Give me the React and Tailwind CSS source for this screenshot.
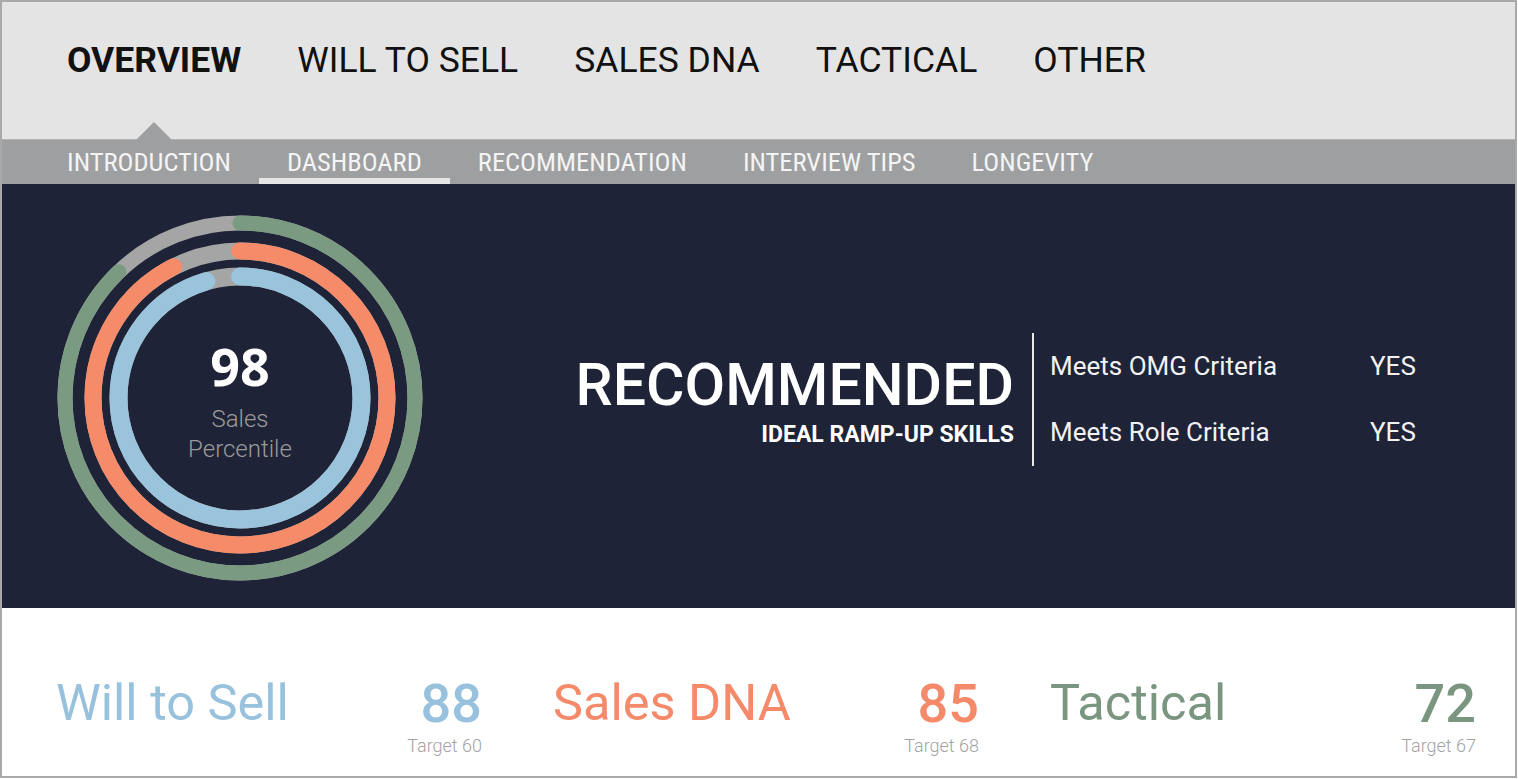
import React from 'react';

const mainTabs = ['OVERVIEW', 'WILL TO SELL', 'SALES DNA', 'TACTICAL', 'OTHER'];
const subTabs = ['INTRODUCTION', 'DASHBOARD', 'RECOMMENDATION', 'INTERVIEW TIPS', 'LONGEVITY'];

const rings = [
  { r: 175, sw: 15, frac: 0.878, color: '#7b9a82' },
  { r: 147, sw: 17, frac: 0.925, color: '#f68b69' },
  { r: 121.5, sw: 18, frac: 0.955, color: '#9ac3dc' },
];

const scores = [
  { label: 'Will to Sell', value: 88, target: 60, color: 'text-[#97c1dc]' },
  { label: 'Sales DNA', value: 85, target: 68, color: 'text-[#f48a69]' },
  { label: 'Tactical', value: 72, target: 67, color: 'text-[#7a9580]' },
];

const Donut = () => (
  <div className="relative w-[380px] h-[380px] shrink-0">
    <svg width="380" height="380" viewBox="0 0 380 380">
      {rings.map((ring) => {
        const c = 2 * Math.PI * ring.r;
        return (
          <g key={ring.r} transform="rotate(-90 190 190)">
            <circle cx="190" cy="190" r={ring.r} fill="none" stroke="#a5a5a5" strokeWidth={ring.sw} />
            <circle
              cx="190"
              cy="190"
              r={ring.r}
              fill="none"
              stroke={ring.color}
              strokeWidth={ring.sw}
              strokeLinecap="round"
              strokeDasharray={`${ring.frac * c} ${c}`}
            />
          </g>
        );
      })}
    </svg>
    {/* centre label */}
    <div className="absolute inset-0 flex flex-col items-center justify-center pt-[8px]">
      <span className="font-['Open_Sans',sans-serif] font-bold text-[52px] leading-[52px] text-white">98</span>
      <span className="mt-[12px] font-['Roboto',sans-serif] font-light text-[24px] leading-[30px] text-[#9b9b9b]">Sales</span>
      <span className="font-['Roboto',sans-serif] font-light text-[24px] leading-[30px] text-[#9b9b9b]">Percentile</span>
    </div>
  </div>
);

export default function App() {
  return (
    <div className="w-[1517px] h-[778px] border-2 border-[#a9a9a9] bg-white flex flex-col font-['Roboto',sans-serif] overflow-hidden">
      {/* Main tabs */}
      <div className="h-[137px] bg-[#e4e4e4] flex items-center pl-[65px] pb-[20px] gap-[56px] shrink-0">
        {mainTabs.map((tab, i) => (
          <div key={tab} className="relative">
            <span className={`text-[35.5px] leading-[41px] text-[#111] ${i === 0 ? 'font-bold' : 'font-normal'}`}>
              {tab}
            </span>
            {i === 0 && (
              <span className="absolute left-1/2 -translate-x-1/2 top-[82px] w-0 h-0 border-l-[25px] border-r-[25px] border-b-[25px] border-l-transparent border-r-transparent border-b-[#9e9fa1]" />
            )}
          </div>
        ))}
      </div>

      {/* Sub tabs */}
      <div className="h-[45px] bg-[#9e9fa1] border-t border-[#b4b4b4] flex items-stretch pl-[37px] shrink-0">
        {subTabs.map((tab, i) => (
          <div key={tab} className="relative flex items-center px-[28px]">
            <span className="font-['Roboto_Condensed','Roboto',sans-serif] [font-stretch:condensed] text-[26.5px] leading-[30px] text-[#f4f4f4]">
              {tab}
            </span>
            {i === 1 && <span className="absolute left-0 right-0 bottom-0 h-[6px] bg-[#e6e6e6]" />}
          </div>
        ))}
      </div>

      {/* Summary panel */}
      <div className="h-[424px] bg-[#1f2337] flex items-start shrink-0">
        <div className="ml-[48px] mt-[24px]">
          <Donut />
        </div>
        <div className="ml-[124px] mt-[170px] w-[460px] flex flex-col items-end text-white">
          <span className="font-medium text-[59px] leading-[61px]">RECOMMENDED</span>
          <span className="mt-[7px] font-bold text-[23px] leading-[26px]">IDEAL RAMP-UP SKILLS</span>
        </div>
        <div className="ml-[18px] mt-[149px] w-[2px] h-[133px] bg-[#e8e8e8]" />
        <div className="ml-[16px] mt-[167px] flex flex-col gap-[36px] text-[#f2f2f2] text-[26px] leading-[30px]">
          <div className="flex">
            <span className="w-[320px]">Meets OMG Criteria</span>
            <span>YES</span>
          </div>
          <div className="flex">
            <span className="w-[320px]">Meets Role Criteria</span>
            <span>YES</span>
          </div>
        </div>
      </div>

      {/* Score row */}
      <div className="flex-1 grid grid-cols-[426px_426px_426px] gap-[71px] pl-[54px] pt-[69px]">
        {scores.map((s) => (
          <div key={s.label} className="flex justify-between items-start">
            <span className={`text-[50.5px] leading-[51px] font-normal ${s.color}`}>{s.label}</span>
            <div className="flex flex-col items-end">
              <span className={`text-[54px] leading-[54px] font-medium ${s.color}`}>{s.value}</span>
              <span className="mt-[5px] text-[18px] leading-[20px] font-light text-[#a3a3a3]">Target {s.target}</span>
            </div>
          </div>
        ))}
      </div>
    </div>
  );
}
